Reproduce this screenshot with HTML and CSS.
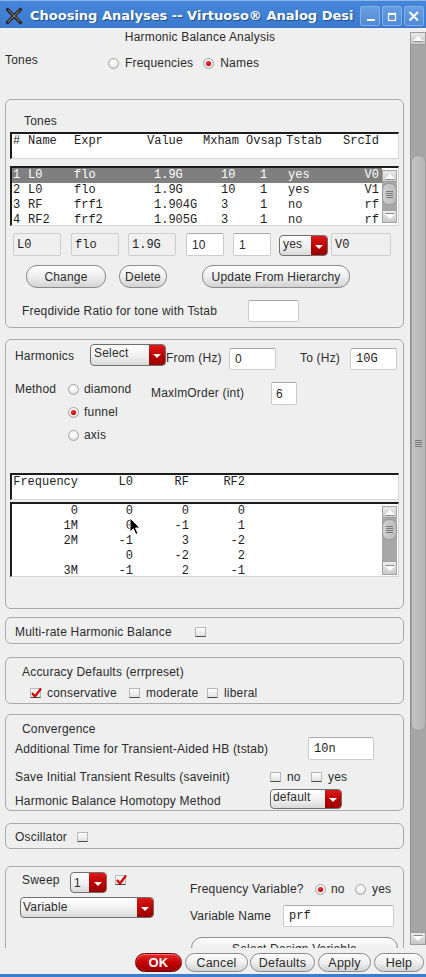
FILE: index.html
```html
<!DOCTYPE html>
<html>
<head>
<meta charset="utf-8">
<title>Choosing Analyses</title>
<link rel="stylesheet" href="styles.css">
</head>
<body>
<div class="window">
  <div class="titlebar">
    <svg class="appicon" width="18" height="18" viewBox="0 0 18 18">
      <path d="M2.5 2.5 L15.5 15.5 M15.5 2.5 L2.5 15.5" stroke="#2b2b2b" stroke-width="3.4" stroke-linecap="round"/>
      <path d="M3.5 3 L15 14.5 M14.5 3.5 L3 15" stroke="#9a9a9a" stroke-width="0.9"/>
    </svg>
    <div class="title">Choosing Analyses -- Virtuoso® Analog Desi</div>
    <div class="tbtns">
      <div class="tbtn"><svg width="18" height="18" viewBox="0 0 18 18"><rect x="6" y="12" width="8" height="2" fill="#fff"/></svg></div>
      <div class="tbtn"><svg width="18" height="18" viewBox="0 0 18 18"><rect x="5.5" y="6.5" width="7" height="7" fill="none" stroke="#fff" stroke-width="1.2"/><rect x="5" y="6" width="8" height="2" fill="#fff"/></svg></div>
      <div class="tbtn"><svg width="18" height="18" viewBox="0 0 18 18"><path d="M4.5 5 L13 13.5 M13 5 L4.5 13.5" stroke="#fff" stroke-width="2"/></svg></div>
    </div>
  </div>

  <div class="client">
    <div class="content">
      <div class="heading">Harmonic Balance Analysis</div>
      <div class="tones-row">
        <div class="lbl tones-lbl">Tones</div>
        <div class="radios">
          <span class="radio"></span><span class="rtext rt-first">Frequencies</span>
          <span class="radio on"></span><span class="rtext">Names</span>
        </div>
      </div>

      <div class="group g1">
        <div class="lbl glabel">Tones</div>
        <div class="tbl-head mono">
          <div class="trow"><span class="c-n">#</span><span class="c-name">Name</span><span class="c-expr">Expr</span><span class="c-val">Value</span><span class="c-mx">Mxham</span><span class="c-ov">Ovsap</span><span class="c-ts">Tstab</span><span class="c-src">SrcId</span></div>
        </div>
        <div class="tbl-body mono">
          <div class="rows">
            <div class="trow sel"><span class="c-n">1</span><span class="c-name">L0</span><span class="c-expr">flo</span><span class="c-val d">1.9G</span><span class="c-mx d">10</span><span class="c-ov d">1</span><span class="c-ts d">yes</span><span class="c-src d">V0</span></div>
            <div class="trow"><span class="c-n">2</span><span class="c-name">L0</span><span class="c-expr">flo</span><span class="c-val d">1.9G</span><span class="c-mx d">10</span><span class="c-ov d">1</span><span class="c-ts d">yes</span><span class="c-src d">V1</span></div>
            <div class="trow"><span class="c-n">3</span><span class="c-name">RF</span><span class="c-expr">frf1</span><span class="c-val d">1.904G</span><span class="c-mx d">3</span><span class="c-ov d">1</span><span class="c-ts d">no</span><span class="c-src d">rf</span></div>
            <div class="trow"><span class="c-n">4</span><span class="c-name">RF2</span><span class="c-expr">frf2</span><span class="c-val d">1.905G</span><span class="c-mx d">3</span><span class="c-ov d">1</span><span class="c-ts d">no</span><span class="c-src d">rf</span></div>
          </div>
          <div class="isb isb-tones">
            <div class="isb-btn"><i class="tri-up"></i></div>
            <div class="isb-track"><div class="isb-thumb"><i class="grip"></i></div></div>
            <div class="isb-btn isb-down"><i class="tri-down"></i></div>
          </div>
        </div>
        <div class="edit-row">
          <div class="field ro mono e1">L0</div>
          <div class="field ro mono e2">flo</div>
          <div class="field ro mono e3">1.9G</div>
          <div class="field e4">10</div>
          <div class="field e5">1</div>
          <div class="dd dd-yes"><span class="dd-text">yes</span><span class="dd-btn"><i class="tri-dn"></i></span></div>
          <div class="field ro mono e7">V0</div>
        </div>
        <div class="btn-row">
          <div class="pbtn b-change">Change</div>
          <div class="pbtn b-delete">Delete</div>
          <div class="pbtn b-update">Update From Hierarchy</div>
        </div>
        <div class="freq-row">
          <div class="lbl fr-lbl">Freqdivide Ratio for tone with Tstab</div>
          <div class="field fr-in"></div>
        </div>
      </div>

      <div class="group g2">
        <div class="h-row">
          <div class="lbl h-lbl">Harmonics</div>
          <div class="dd dd-select"><span class="dd-text">Select</span><span class="dd-btn"><i class="tri-dn"></i></span></div>
          <div class="lbl from-lbl">From (Hz)</div>
          <div class="field from-in">0</div>
          <div class="lbl to-lbl">To (Hz)</div>
          <div class="field mono to-in">10G</div>
        </div>
        <div class="m-block">
          <div class="lbl m-lbl">Method</div>
          <div class="m-radios">
            <div class="m-opt"><span class="radio"></span><span>diamond</span></div>
            <div class="m-opt"><span class="radio on"></span><span>funnel</span></div>
            <div class="m-opt"><span class="radio"></span><span>axis</span></div>
          </div>
          <div class="lbl mx-lbl">MaxlmOrder (int)</div>
          <div class="field mx-in">6</div>
        </div>
        <div class="f-head mono">
          <div class="frow"><span class="fc1">Frequency</span><span class="fc2">L0</span><span class="fc3">RF</span><span class="fc4">RF2</span></div>
        </div>
        <div class="f-body mono">
          <div class="frows">
            <div class="frow"><span class="fc1">0</span><span class="fc2">0</span><span class="fc3">0</span><span class="fc4">0</span></div>
            <div class="frow"><span class="fc1">1M</span><span class="fc2">0</span><span class="fc3">-1</span><span class="fc4">1</span></div>
            <div class="frow"><span class="fc1">2M</span><span class="fc2">-1</span><span class="fc3">3</span><span class="fc4">-2</span></div>
            <div class="frow"><span class="fc1"></span><span class="fc2">0</span><span class="fc3">-2</span><span class="fc4">2</span></div>
            <div class="frow"><span class="fc1">3M</span><span class="fc2">-1</span><span class="fc3">2</span><span class="fc4">-1</span></div>
          </div>
          <div class="isb isb-freq">
            <div class="isb-btn"><i class="tri-up"></i></div>
            <div class="isb-track"><div class="isb-thumb"><i class="grip"></i></div></div>
            <div class="isb-btn isb-down"><i class="tri-down"></i></div>
          </div>
        </div>
      </div>

      <div class="group g3">
        <div class="lbl mr-lbl">Multi-rate Harmonic Balance</div>
        <span class="cb"></span>
      </div>

      <div class="group g4">
        <div class="lbl glabel2">Accuracy Defaults (errpreset)</div>
        <div class="acc-row">
          <div class="opt o-cons"><span class="cb"><svg class="chk" width="13" height="12" viewBox="0 0 13 12"><path d="M2 6 L5 9.5 L11 1.5" fill="none" stroke="#d40000" stroke-width="2.2"/></svg></span><span>conservative</span></div>
          <div class="opt o-mod"><span class="cb"></span><span>moderate</span></div>
          <div class="opt"><span class="cb"></span><span>liberal</span></div>
        </div>
      </div>

      <div class="group g5">
        <div class="lbl glabel2">Convergence</div>
        <div class="c-row1">
          <div class="lbl c-lbl1">Additional Time for Transient-Aided HB (tstab)</div>
          <div class="field mono ts-in">10n</div>
        </div>
        <div class="c-row2">
          <div class="lbl c-lbl2">Save Initial Transient Results (saveinit)</div>
          <div class="opt o-no"><span class="cb"></span><span>no</span></div>
          <div class="opt"><span class="cb"></span><span>yes</span></div>
        </div>
        <div class="c-row3">
          <div class="lbl c-lbl3">Harmonic Balance Homotopy Method</div>
          <div class="dd dd-default"><span class="dd-text">default</span><span class="dd-btn"><i class="tri-dn"></i></span></div>
        </div>
      </div>

      <div class="group g6">
        <div class="lbl osc-lbl">Oscillator</div>
        <span class="cb"></span>
      </div>

      <div class="group g7">
        <div class="sw-left">
          <div class="sw-top">
            <div class="lbl sw-lbl">Sweep</div>
            <div class="dd dd-one"><span class="dd-text">1</span><span class="dd-btn"><i class="tri-dn"></i></span></div>
            <span class="cb sw-cb"><svg class="chk" width="13" height="12" viewBox="0 0 13 12"><path d="M2 6 L5 9.5 L11 1.5" fill="none" stroke="#d40000" stroke-width="2.2"/></svg></span>
          </div>
          <div class="dd dd-var"><span class="dd-text">Variable</span><span class="dd-btn"><i class="tri-dn"></i></span></div>
        </div>
        <div class="sw-right">
          <div class="fv-row">
            <div class="lbl fv-lbl">Frequency Variable?</div>
            <div class="opt o-fvno"><span class="radio on"></span><span>no</span></div>
            <div class="opt"><span class="radio"></span><span>yes</span></div>
          </div>
          <div class="vn-row">
            <div class="lbl vn-lbl">Variable Name</div>
            <div class="field mono vn-in">prf</div>
          </div>
          <div class="pbtn sdv">Select Design Variable</div>
        </div>
      </div>
    </div>

    <div class="vscroll">
      <div class="sb-btn"><i class="tri-up"></i></div>
      <div class="sb-track"><div class="sb-thumb"><i class="grip"></i></div></div>
      <div class="sb-btn"><i class="tri-down"></i></div>
    </div>
  </div>

  <div class="buttonbar">
    <div class="pbtn bb ok">OK</div>
    <div class="pbtn bb b-cancel">Cancel</div>
    <div class="pbtn bb b-defaults">Defaults</div>
    <div class="pbtn bb b-apply">Apply</div>
    <div class="pbtn bb b-help">Help</div>
  </div>
  <div class="bottomstrip"></div>

  <svg class="cursor" width="13" height="20" viewBox="0 0 13 20">
    <path d="M1 1 L1 15 L4.3 11.8 L6.8 17.5 L9 16.5 L6.6 11 L11 11 Z" fill="#000" stroke="#fff" stroke-width="1"/>
  </svg>
</div>
</body>
</html>
```

FILE: styles.css
```css
* { box-sizing: border-box; }

body {
  margin: 0;
  background: #efefef;
  font-family: "Liberation Sans", Arial, sans-serif;
  font-size: 12px;
  letter-spacing: 0.2px;
  color: #2b2b2b;
}

.window {
  position: relative;
  width: 426px;
  height: 977px;
  display: flex;
  flex-direction: column;
  background: #efefef;
  overflow: hidden;
}

/* ---------- title bar ---------- */
.titlebar {
  height: 28px;
  flex: none;
  display: flex;
  align-items: center;
  padding-top: 2px;
  border-top: 1px solid #8db5ea;
  background: linear-gradient(#4686d8, #3a7bcf);
}
.appicon { flex: none; margin-left: 5px; }
.title {
  flex: 1;
  margin-left: 7px;
  white-space: nowrap;
  overflow: hidden;
  color: #fff;
  font-family: "DejaVu Sans", sans-serif;
  font-weight: bold;
  font-size: 13px;
  letter-spacing: 0;
  text-shadow: 1px 1px 1px #1d4a86;
}
.tbtns { display: flex; gap: 2px; margin-right: 2px; flex: none; }
.tbtn {
  width: 20px;
  height: 20px;
  border: 1px solid #80b0ea;
  border-radius: 2px;
  background: linear-gradient(#6a9fe0, #5089d6);
}
.tbtn svg { display: block; }

/* ---------- client ---------- */
.client { height: 920px; flex: none; display: flex; }
.content { width: 410px; height: 920px; overflow: hidden; flex: none; }

.lbl { line-height: 14px; white-space: nowrap; flex: none; }
.mono {
  font-family: "Liberation Mono", "DejaVu Sans Mono", monospace;
  font-size: 12px;
  letter-spacing: 0;
  color: #1e1e1e;
}

.heading {
  width: 400px;
  margin-top: 1px;
  height: 16px;
  line-height: 16px;
  text-align: center;
}

.tones-row { display: flex; height: 18px; margin-top: 8px; }
.tones-lbl { margin-left: 5px; width: 103px; }
.radios { display: flex; align-items: center; height: 14px; margin-top: 3px; }
.rtext { margin-left: 6px; line-height: 14px; }
.rt-first { margin-right: 10px; }

/* radios & checkboxes */
.radio {
  position: relative;
  flex: none;
  display: inline-block;
  width: 11px;
  height: 11px;
  border-radius: 50%;
  border: 1px solid #a6a6a6;
  background: radial-gradient(circle at 50% 35%, #ffffff 0, #f3f3f3 45%, #cdcdcd 100%);
}
.radio.on::after {
  content: "";
  position: absolute;
  left: 2px;
  top: 2px;
  width: 5px;
  height: 5px;
  border-radius: 50%;
  background: radial-gradient(circle at 40% 35%, #ff3a3a, #c80000 60%, #850000);
}
.cb {
  position: relative;
  flex: none;
  display: inline-block;
  width: 11px;
  height: 10px;
  border: 1px solid #b8b8b8;
  border-bottom-color: #4a4a4a;
  background: linear-gradient(#fdfdfd, #e2e2e2);
}
.chk { position: absolute; left: -1px; top: -2px; }

.opt { display: flex; align-items: center; gap: 6px; line-height: 14px; white-space: nowrap; flex: none; }

/* groups */
.group {
  margin-left: 5px;
  width: 399px;
  border: 1px solid #a9a9a9;
  border-radius: 6px;
}
.g1 { margin-top: 28px; height: 229px; padding-top: 14px; }
.glabel { margin-left: 18px; }
.glabel2 { margin-left: 16px; }

/* tables */
.tbl-head, .f-head, .tbl-body, .f-body {
  margin-left: 4px;
  width: 389px;
  background: #fff;
  border-top: 2px solid #1c1c1c;
  border-left: 2px solid #1c1c1c;
  border-right: 1px solid #d6d6d6;
  border-bottom: 1px solid #d6d6d6;
}
.tbl-head { margin-top: 4px; height: 27px; }
.tbl-body { margin-top: 7px; height: 60px; display: flex; overflow: hidden; }
.rows { width: 370px; flex: none; }

.trow { display: flex; height: 15px; line-height: 15px; white-space: pre; }
.tbl-head .trow { height: 14px; line-height: 14px; }
.trow.sel { background: #7f7f7f; color: #fff; }
.trow span { flex: none; overflow: hidden; }
.c-n { width: 16px; padding-left: 1px; }
.c-name { width: 46px; }
.c-expr { width: 73px; }
.c-val { width: 56px; }
.c-mx { width: 43px; }
.c-ov { width: 40px; }
.c-ts { width: 57px; }
.c-src { width: 37px; }
.c-val.d { padding-left: 7px; }
.c-mx.d { padding-left: 18px; }
.c-ov.d { padding-left: 14px; }
.c-ts.d { padding-left: 2px; }
.c-src.d { text-align: right; padding-right: 1px; }

/* inner scrollbars */
.isb { width: 15px; flex: none; display: flex; flex-direction: column; padding-top: 2px; }
.isb-btn {
  flex: none;
  height: 12px;
  border: 1px solid #a2a2a2;
  background: linear-gradient(#ececec, #c9c9c9);
  display: flex;
  align-items: center;
  justify-content: center;
}
.isb-down { height: 13px; }
.isb-track { flex: none; background: #a7a7a7; padding-top: 1px; }
.isb-tones .isb-track { height: 28px; }
.isb-freq .isb-track { height: 43px; }
.isb-thumb {
  height: 22px;
  border: 1px solid #9a9a9a;
  border-radius: 7px;
  background: linear-gradient(to right, #cfcfcf, #bdbdbd);
  display: flex;
  align-items: center;
  justify-content: center;
}
.isb-freq .isb-thumb { height: 21px; }
.isb-freq .isb-down { height: 14px; }

.tri-up, .tri-down, .tri-dn { display: block; width: 0; height: 0; }
.tri-up {
  border-left: 5px solid transparent;
  border-right: 5px solid transparent;
  border-bottom: 5px solid #fff;
  filter: drop-shadow(0 1px 0 #8c8c8c);
}
.tri-down {
  border-left: 5px solid transparent;
  border-right: 5px solid transparent;
  border-top: 5px solid #fff;
  filter: drop-shadow(0 -1px 0 #8c8c8c);
}
.grip {
  display: block;
  width: 7px;
  height: 7px;
  background: repeating-linear-gradient(to bottom, #7a7a7a 0 1px, transparent 1px 2px);
}

/* fields */
.field {
  flex: none;
  height: 23px;
  display: flex;
  align-items: center;
  padding-left: 3px;
  background: #fff;
  border: 1px solid #cbcbcb;
  border-top-color: #a9a9a9;
  border-radius: 2px;
  line-height: 14px;
}
.field.ro { background: #efefef; border-color: #cdcdcd; }

.edit-row { display: flex; align-items: flex-start; margin-top: 7px; height: 23px; }
.e1 { margin-left: 7px; width: 48px; }
.e2 { margin-left: 10px; width: 48px; }
.e3 { margin-left: 9px; width: 48px; }
.e4 { margin-left: 10px; width: 38px; padding-left: 5px; }
.e5 { margin-left: 9px; width: 38px; padding-left: 5px; }
.dd-yes { margin: 2px 0 0 8px; width: 49px; height: 21px; }
.e7 { margin-left: 3px; width: 60px; }

/* dropdowns */
.dd {
  flex: none;
  display: flex;
  border: 1px solid #6f6f6f;
  border-radius: 4px;
  overflow: hidden;
  background: linear-gradient(#ffffff, #f2f2f2 50%, #d9d9d9);
}
.dd-text { flex: 1; padding-left: 3px; line-height: 17px; white-space: nowrap; overflow: hidden; }
.dd-btn {
  flex: none;
  width: 16px;
  display: flex;
  align-items: center;
  justify-content: center;
  background: linear-gradient(#de1a1a, #b80000 55%, #9a0000);
}
.tri-dn {
  border-left: 4px solid transparent;
  border-right: 4px solid transparent;
  border-top: 4px solid #fff;
  margin-top: 2px;
}

/* push buttons */
.pbtn {
  flex: none;
  height: 23px;
  display: flex;
  align-items: center;
  justify-content: center;
  white-space: nowrap;
  border: 1px solid #8a8a8a;
  border-radius: 11px;
  background: linear-gradient(#fdfdfd, #efefef 50%, #d3d3d3);
  box-shadow: inset 0 1px 0 #fff;
}
.btn-row { display: flex; margin-top: 9px; height: 23px; }
.b-change { margin-left: 20px; width: 80px; }
.b-delete { margin-left: 13px; width: 48px; }
.b-update { margin-left: 35px; width: 148px; }

.freq-row { display: flex; align-items: center; margin-top: 12px; height: 22px; }
.fr-lbl { margin-left: 16px; width: 226px; }
.fr-in { width: 51px; height: 22px; }

/* harmonics group */
.g2 { margin-top: 11px; height: 270px; padding-top: 4px; }
.h-row { display: flex; align-items: flex-start; height: 26px; }
.h-lbl { margin: 5px 0 0 9px; width: 75px; }
.dd-select { width: 76px; height: 22px; }
.dd-select .dd-text { line-height: 16px; }
.from-lbl { margin-top: 7px; width: 63px; }
.from-in { margin-top: 4px; width: 47px; height: 22px; padding-left: 5px; }
.to-lbl { margin: 7px 0 0 24px; width: 50px; }
.to-in { margin-top: 4px; width: 47px; height: 22px; padding-left: 5px; }

.m-block { display: flex; align-items: flex-start; margin-top: 12px; }
.m-lbl { margin-left: 9px; width: 53px; }
.m-radios { width: 83px; flex: none; display: flex; flex-direction: column; gap: 9px; }
.m-opt { display: flex; align-items: center; gap: 5px; height: 14px; line-height: 14px; }
.mx-lbl { margin-top: 4px; width: 120px; }
.mx-in { width: 26px; height: 23px; padding-left: 4px; }

.f-head { margin-top: 31px; height: 27px; }
.f-body { margin-top: 2px; height: 75px; display: flex; overflow: hidden; }
.frows { width: 370px; flex: none; }
.frow { display: flex; height: 15px; line-height: 15px; white-space: pre; }
.f-head .frow { height: 14px; line-height: 14px; }
.frow span { flex: none; text-align: right; }
.fc1 { width: 66px; }
.fc2 { width: 55px; }
.fc3 { width: 56px; }
.fc4 { width: 56px; }

/* small groups */
.g3 { margin-top: 8px; height: 27px; display: flex; align-items: center; padding-top: 2px; }
.mr-lbl { margin-left: 9px; width: 180px; }

.g4 { margin-top: 13px; height: 47px; padding-top: 7px; }
.acc-row { display: flex; margin: 7px 0 0 24px; height: 14px; }
.o-cons { width: 99px; }
.o-mod { width: 78px; }

.g5 { margin-top: 10px; height: 97px; padding-top: 7px; }
.c-row1 { display: flex; align-items: center; margin-top: 1px; height: 23px; }
.c-lbl1 { margin-left: 9px; width: 293px; }
.ts-in { width: 66px; padding-left: 5px; }
.c-row2 { display: flex; align-items: center; margin-top: 10px; height: 14px; }
.c-lbl2 { margin-left: 9px; width: 255px; }
.o-no { width: 41px; }
.c-row3 { display: flex; align-items: flex-start; margin-top: 5px; }
.c-lbl3 { margin: 5px 0 0 9px; width: 255px; }
.dd-default { width: 72px; height: 20px; }
.dd-default .dd-text { line-height: 15px; padding-left: 2px; }

.g6 { margin-top: 12px; height: 26px; display: flex; align-items: center; padding-top: 2px; }
.osc-lbl { margin-left: 9px; width: 62px; }

.g7 { margin-top: 17px; height: 120px; display: flex; align-items: flex-start; }
.sw-left { margin-left: 14px; width: 170px; flex: none; padding-top: 5px; }
.sw-top { display: flex; align-items: flex-start; height: 21px; }
.sw-lbl { margin: 1px 0 0 2px; width: 48px; }
.dd-one { width: 37px; height: 21px; }
.dd-one .dd-btn { width: 17px; }
.dd-one .dd-text { line-height: 20px; }
.sw-cb { margin: 3px 0 0 8px; }
.dd-var { margin-top: 4px; width: 134px; height: 21px; }
.dd-var .dd-text { padding-left: 2px; line-height: 18px; }
.sw-right { width: 208px; flex: none; padding-top: 15px; }
.fv-row { display: flex; align-items: center; height: 14px; }
.fv-lbl { width: 125px; }
.o-fvno { width: 40px; gap: 5px; }
.vn-row { display: flex; align-items: center; margin-top: 9px; height: 22px; }
.vn-lbl { width: 93px; }
.vn-in { width: 111px; height: 22px; padding-left: 5px; }
.sdv { margin: 10px 0 0 1px; width: 207px; height: 23px; }

/* main scrollbar */
.vscroll { width: 16px; flex: none; display: flex; flex-direction: column; padding-top: 4px; }
.sb-btn {
  flex: none;
  height: 13px;
  border: 1px solid #9c9c9c;
  background: linear-gradient(#e8e8e8, #c6c6c6);
  display: flex;
  align-items: center;
  justify-content: center;
}
.sb-track {
  flex: none;
  height: 887px;
  background: #a5a5a5;
  border-left: 1px solid #8f8f8f;
  padding-top: 110px;
}
.sb-thumb {
  height: 576px;
  border: 1px solid #9d9d9d;
  border-radius: 7px;
  background: linear-gradient(to right, #c4c4c4, #b6b6b6);
  display: flex;
  align-items: center;
  justify-content: center;
}

/* button bar */
.buttonbar { height: 26px; flex: none; display: flex; padding: 5px 0 0 135px; }
.bb { height: 19px; border-radius: 10px; font-size: 12.5px; }
.ok {
  width: 47px;
  color: #fff;
  font-weight: bold;
  font-size: 13px;
  border-color: #6e0000;
  background: linear-gradient(#ea2a2a, #c00000 55%, #a00000);
  box-shadow: inset 0 1px 0 #ff7070;
}
.b-cancel { margin-left: 3px; width: 63px; }
.b-defaults { margin-left: 2px; width: 65px; }
.b-apply { margin-left: 3px; width: 53px; }
.b-help { margin-left: 3px; width: 50px; }
.bottomstrip { height: 3px; flex: none; background: #3b7dd0; }

.cursor { position: absolute; left: 129px; top: 517px; }
```
